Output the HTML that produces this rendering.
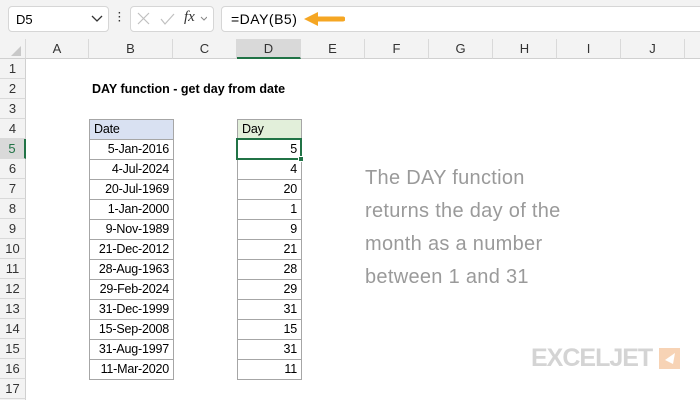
<!DOCTYPE html>
<html><head><style>
*{margin:0;padding:0;box-sizing:border-box}
body{width:700px;height:400px;background:#fff;font-family:"Liberation Sans","DejaVu Sans",sans-serif;font-size:13px;position:relative;overflow:hidden;color:#000}
.a{position:absolute;white-space:nowrap}
.top{left:0;top:0;width:700px;height:39px;background:#f3f3f3}
.box{background:#fff;border:1px solid #d6d6d6;border-radius:4px}
.ch{top:39px;height:20px;background:#f3f3f3;border-right:1px solid #d9d9d9;border-bottom:1px solid #d0d0d0;text-align:center;line-height:20px;color:#333}
.rh{left:0;width:26px;height:20px;background:#f3f3f3;border-bottom:1px solid #d9d9d9;border-right:1px solid #d0d0d0;text-align:center;line-height:20px;color:#333}
.c{height:21px;line-height:19px;border:1px solid #a6a6a6;padding:0 4px;font-size:12.5px;letter-spacing:-0.2px}
.r{text-align:right}
</style></head><body>
<div class="a top"></div>
<div class="a box" style="left:8px;top:6px;width:101px;height:26px;"></div>
<div class="a" style="left:16px;top:12px;">D5</div>
<svg class="a" style="left:91px;top:15px" width="12" height="8"><path d="M1 1l5 5 5-5" stroke="#333" stroke-width="1.3" fill="none"/></svg>
<div class="a" style="left:118px;top:12px;width:3px;height:14px;color:#333;font-weight:bold;line-height:4px;font-size:10px">·<br>·<br>·</div>
<div class="a box" style="left:130px;top:6px;width:84px;height:26px;"></div>
<svg class="a" style="left:137px;top:12px" width="70" height="14"><path d="M1 1l11 11M12 1L1 12" stroke="#c0c0c0" stroke-width="1.2"/><path d="M24 7l4 5 9-10" stroke="#c0c0c0" stroke-width="1.2" fill="none"/><path d="M64 5l3 3 3-3" stroke="#888" fill="none"/></svg>
<div class="a" style="left:184px;top:9px;font-family:'Liberation Serif',serif;font-style:italic;font-size:15px;color:#333">fx</div>
<div class="a box" style="left:221px;top:6px;width:485px;height:26px;"></div>
<div class="a" style="left:231px;top:11px;font-size:14px;letter-spacing:.5px">=DAY(B5)</div>
<svg class="a" style="left:303px;top:11px" width="42" height="16"><path d="M14 8H40" stroke="#f5a623" stroke-width="5" stroke-linecap="round"/><path d="M1 8L15 1V15Z" fill="#f5a623"/></svg>
<div class="a ch" style="left:0;width:26px"></div>
<svg class="a" style="left:10px;top:45px" width="12" height="12"><path d="M11 1V11H1Z" fill="#c8c8c8"/></svg>
<div class="a ch" style="left:26px;width:63px">A</div>
<div class="a ch" style="left:89px;width:84px">B</div>
<div class="a ch" style="left:173px;width:64px">C</div>
<div class="a ch" style="left:237px;width:64px;background:#d9d9d9;border-bottom:2px solid #217346">D</div>
<div class="a ch" style="left:301px;width:64px">E</div>
<div class="a ch" style="left:365px;width:64px">F</div>
<div class="a ch" style="left:429px;width:64px">G</div>
<div class="a ch" style="left:493px;width:64px">H</div>
<div class="a ch" style="left:557px;width:64px">I</div>
<div class="a ch" style="left:621px;width:64px">J</div>
<div class="a ch" style="left:685px;width:20px"></div>
<div class="a" style="left:0;top:59px;width:26px;height:341px;background:#f3f3f3;border-right:1px solid #d0d0d0"></div>
<div class="a rh" style="top:59px">1</div><div class="a rh" style="top:79px">2</div><div class="a rh" style="top:99px">3</div><div class="a rh" style="top:119px">4</div>
<div class="a rh" style="top:139px;background:#d9d9d9;border-right:2px solid #217346;color:#217346">5</div>
<div class="a rh" style="top:159px">6</div><div class="a rh" style="top:179px">7</div><div class="a rh" style="top:199px">8</div><div class="a rh" style="top:219px">9</div><div class="a rh" style="top:239px">10</div><div class="a rh" style="top:259px">11</div><div class="a rh" style="top:279px">12</div><div class="a rh" style="top:299px">13</div><div class="a rh" style="top:319px">14</div><div class="a rh" style="top:339px">15</div><div class="a rh" style="top:359px">16</div><div class="a rh" style="top:379px">17</div>
<div class="a" style="left:92px;top:82px;font-weight:bold;font-size:12.5px">DAY function - get day from date</div>
<div class="a c" style="left:89px;top:119px;width:85px;background:#d9e1f2">Date</div>
<div class="a c" style="left:237px;top:119px;width:65px;background:#e2efda">Day</div>
<div id="t"></div>
<script>
var d=["5-Jan-2016","4-Jul-2024","20-Jul-1969","1-Jan-2000","9-Nov-1989","21-Dec-2012","28-Aug-1963","29-Feb-2024","31-Dec-1999","15-Sep-2008","31-Aug-1997","11-Mar-2020"],v=[5,4,20,1,9,21,28,29,31,15,31,11],h="";
for(var i=0;i<12;i++){var y=139+i*20;h+='<div class="a c r" style="left:89px;top:'+y+'px;width:85px">'+d[i]+'</div><div class="a c r" style="left:237px;top:'+y+'px;width:65px">'+v[i]+'</div>';}
document.getElementById("t").innerHTML=h;
</script>
<div class="a" style="left:236px;top:138px;width:66px;height:22px;border:2px solid #217346"></div>
<div class="a" style="left:298px;top:156px;width:6px;height:6px;background:#217346;border:1px solid #fff"></div>
<div class="a" style="left:365px;top:162px;font-size:20px;line-height:33px;color:#9a9a9a;letter-spacing:.3px">The DAY function<br>returns the day of the<br>month as a number<br>between 1 and 31</div>
<div class="a" style="left:531px;top:344px;font-size:25px;font-weight:bold;color:#d4d4d4;letter-spacing:-1px">EXCELJET</div>
<div class="a" style="left:659px;top:348px;width:21px;height:21px;background:#f7d3b5"></div>
<svg class="a" style="left:662px;top:351px" width="16" height="16"><path d="M13 2L3 9l8 4z" fill="#fff"/></svg>
</body></html>
